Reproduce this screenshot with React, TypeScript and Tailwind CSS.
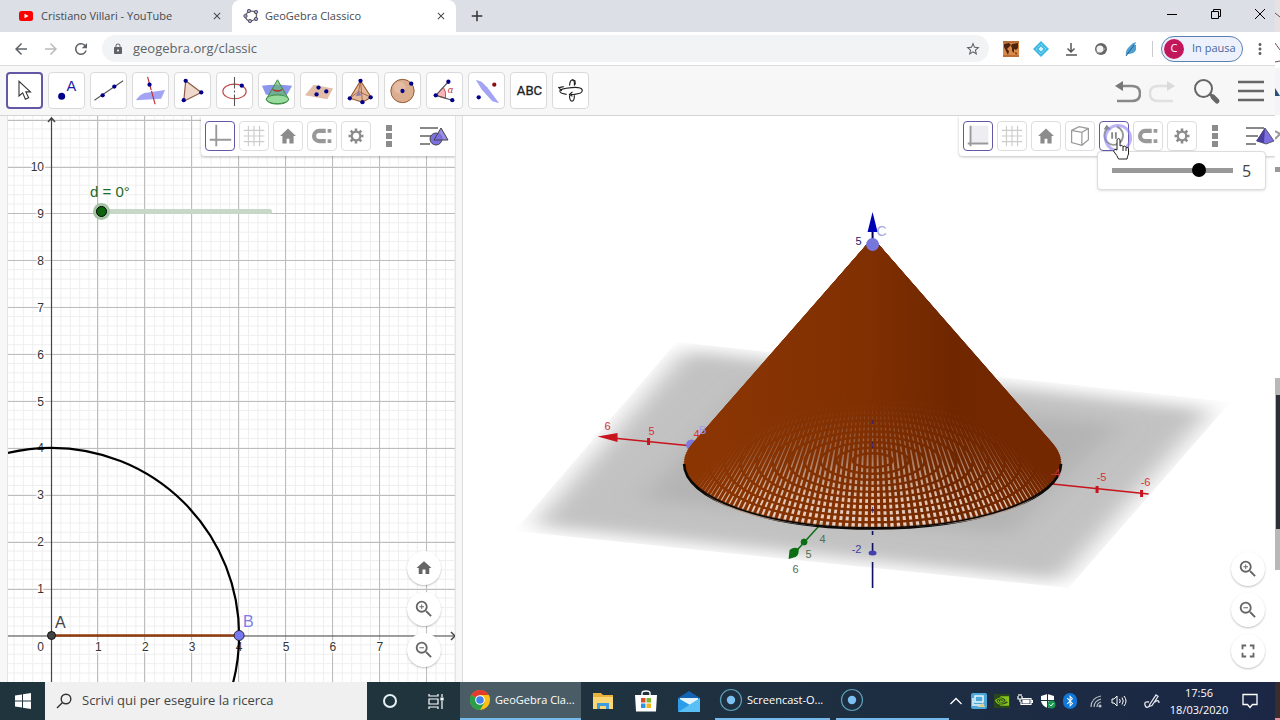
import type { ReactNode } from "react";
import {
  MdAdd,
  MdArrowBack,
  MdArrowForward,
  MdClose,
  MdFullscreen,
  MdHome,
  MdLock,
  MdMoreVert,
  MdRefresh,
  MdStarBorder,
  MdZoomIn,
  MdZoomOut,
} from "react-icons/md";
import { FaBluetoothB } from "react-icons/fa";
import { SiNvidia } from "react-icons/si";

const NAVY = "#00008b";

function Dot({ x, y, fill = NAVY }: { x: number; y: number; fill?: string }) {
  return <circle cx={x} cy={y} r="2.2" fill={fill} />;
}

/* ---------- Browser ---------- */

function GeoGebraLogo() {
  return (
    <svg className="size-4 shrink-0" viewBox="0 0 16 16">
      <ellipse cx="8" cy="8" rx="5.6" ry="4.8" fill="none" stroke="#666" strokeWidth="1.3" transform="rotate(-20 8 8)" />
      {[[6, 3], [13, 4], [13, 11], [7, 13], [2.5, 8]].map(([x, y]) => (
        <circle key={`${x}-${y}`} cx={x} cy={y} r="1.7" fill="#9c9cd8" stroke="#444" strokeWidth="0.8" />
      ))}
    </svg>
  );
}

function TabStrip() {
  return (
    <div className="flex h-8 items-stretch bg-[#dcdfe6] text-[11px] text-[#45494d]">
      <div className="flex w-[232px] items-center gap-2 pl-[19px] pr-[9px]">
        <svg className="h-[14px] w-[14px] shrink-0" viewBox="0 0 14 14">
          <rect y="2" width="14" height="10" rx="2.5" fill="#f00" />
          <path d="M5.5 4.7v4.6L9.5 7z" fill="#fff" />
        </svg>
        <span className="grow">Cristiano Villari - YouTube</span>
        <button aria-label="Chiudi scheda Cristiano Villari">
          <MdClose className="size-3" />
        </button>
      </div>
      <div className="flex w-[224px] items-center gap-1.5 rounded-t-lg bg-white pl-[11px] pr-[9px]">
        <GeoGebraLogo />
        <span className="grow">GeoGebra Classico</span>
        <button aria-label="Chiudi scheda GeoGebra">
          <MdClose className="size-3" />
        </button>
      </div>
      <button className="ml-3 text-[#333]" aria-label="Nuova scheda">
        <MdAdd className="size-[18px]" />
      </button>
      <div className="ml-auto flex items-center gap-8 pb-1 pr-[9px] text-black">
        <button aria-label="Riduci a icona">
          <svg className="size-3" viewBox="0 0 12 12" stroke="currentColor">
            <path d="M1 6.500h10" />
          </svg>
        </button>
        <button aria-label="Ripristina">
          <svg className="size-3" viewBox="0 0 12 12" fill="none" stroke="currentColor">
            <path d="M1.500 3.500h7v7h-7zM3.500 3.500v-2h7v7h-2" />
          </svg>
        </button>
        <button aria-label="Chiudi finestra">
          <svg className="size-3" viewBox="0 0 12 12" stroke="currentColor">
            <path d="M1 1l10 10M11 1L1 11" />
          </svg>
        </button>
      </div>
    </div>
  );
}

function Extensions() {
  return (
    <div className="flex items-center gap-[14px]">
      <button aria-label="Mappa">
        <svg className="size-4" viewBox="0 0 16 16">
          <rect width="16" height="16" fill="#d98a4a" />
          <path d="M1 3l5-1 2 2-2 2-2 2 2 2-1 4-2-4-2-4zM9 3l6-1v5l-2 2-2-1v4l-2-2V7L8 5zM12 11l2 1-1 2z" fill="#4c2410" />
          <path d="M0 15h16M0 1h16" stroke="#9c5424" />
        </svg>
      </button>
      <button aria-label="Rombo">
        <svg className="size-4" viewBox="0 0 16 16">
          <path d="M8 0l8 8-8 8-8-8z" fill="#3cb8e4" />
          <path d="M8 3l5 5-5 5-5-5z" fill="none" stroke="#bdeaf8" strokeDasharray="1 1" />
          <path d="M8 5.500l2.500 2.500-2.500 2.500L5.500 8z" fill="#d8f4fc" />
        </svg>
      </button>
      <button aria-label="Download">
        <svg className="size-4" viewBox="0 0 16 16" fill="none" stroke="#555" strokeWidth="1.5">
          <path d="M8 2v9M4.500 7.500L8 11l3.500-3.500M3 14h11" />
        </svg>
      </button>
      <button aria-label="Sfera">
        <svg className="size-4" viewBox="0 0 16 16">
          <circle cx="8" cy="8" r="6" fill="#666" />
          <circle cx="7" cy="8" r="3.500" fill="#f4f4f4" />
          <path d="M3 11q6 3 9-4" stroke="#aaa" fill="none" />
        </svg>
      </button>
      <button aria-label="Piuma">
        <svg className="size-4" viewBox="0 0 16 16">
          <path d="M3 14Q2 9 7 5q2-3 6-4l-1 3 1 0v5q-2 4-8 4z" fill="#4f9fd0" />
          <path d="M3 15L11 4" stroke="#245e94" />
        </svg>
      </button>
    </div>
  );
}

function AddressBar() {
  return (
    <div className="flex h-[34px] items-center border-b border-[#dcdcdc] bg-white pl-3 pr-1.5 text-[#5f6368]">
      <div className="flex gap-3">
        <button aria-label="Indietro">
          <MdArrowBack className="size-[18px]" />
        </button>
        <button className="text-[#bbb]" aria-label="Avanti">
          <MdArrowForward className="size-[18px]" />
        </button>
        <button aria-label="Ricarica">
          <MdRefresh className="size-[18px]" />
        </button>
      </div>
      <div className="ml-3 flex h-[27px] grow items-center gap-[9px] rounded-full bg-[#f1f3f4] pl-2.5 pr-2">
        <MdLock className="size-3 shrink-0" />
        <input
          className="min-w-0 grow bg-transparent text-[13px] outline-none"
          aria-label="Indirizzo"
          defaultValue="geogebra.org/classic"
        />
        <button aria-label="Preferiti">
          <MdStarBorder className="size-4" />
        </button>
      </div>
      <div className="flex items-center pl-[14px]">
        <Extensions />
        <span className="ml-[13px] mr-2 h-4 w-px bg-[#ccc]" />
        <button className="flex h-[26px] w-[82px] items-center gap-2 rounded-full border border-[#5a80b4] bg-[#edf1fb] pl-0.5 text-[11px] text-[#4868a0]">
          <span className="flex size-5 items-center justify-center rounded-full bg-[#c2185b] text-white">C</span>
          In pausa
        </button>
        <button className="ml-2" aria-label="Menu di Chrome">
          <MdMoreVert className="size-[18px]" />
        </button>
      </div>
    </div>
  );
}

/* ---------- GeoGebra tools ---------- */

const tools: { name: string; icon: ReactNode }[] = [
  {
    name: "Muovi",
    icon: <path d="M12 8v16l4-3.500 3 7 3.500-1.500-3-6.500h5z" fill="#fff" stroke="#333" strokeWidth="1.2" />,
  },
  {
    name: "Punto",
    icon: (
      <>
        <circle cx="13" cy="24" r="3.600" fill={NAVY} />
        <text x="18" y="19" fontSize="15" fill="#1a1aa8" fontFamily="Liberation Sans, sans-serif">A</text>
      </>
    ),
  },
  {
    name: "Retta",
    icon: (
      <>
        <path d="M3.500 28L33 8" stroke="#555" strokeWidth="1.1" />
        <Dot x={12} y={23} />
        <Dot x={24} y={14} />
      </>
    ),
  },
  {
    name: "Perpendicolare",
    icon: (
      <>
        <path d="M3 28q4-6 9-7.500l21-3-4 9z" fill="#a4a4f4" />
        <path d="M15 4l8 29" stroke="#c03030" strokeWidth="1.2" strokeDasharray="14 1" />
        <Dot x={17} y={12} />
      </>
    ),
  },
  {
    name: "Poligono",
    icon: (
      <>
        <path d="M11 8l16 12-18 9z" fill="#f0d8cc" stroke="#8c5a48" strokeWidth="1.2" />
        <Dot x={11} y={8} />
        <Dot x={27} y={20} />
        <Dot x={9} y={28} />
      </>
    ),
  },
  {
    name: "Circonferenza con asse",
    icon: (
      <>
        <ellipse cx="18" cy="19" rx="12" ry="7.500" fill="none" stroke="#c44848" strokeWidth="1.2" />
        <path d="M18 4v12M18 18v2M18 22v12" stroke="#555" strokeWidth="1.1" />
        <Dot x={25.500} y={13} />
      </>
    ),
  },
  {
    name: "Intersezione di superfici",
    icon: (
      <>
        <path d="M3 13q14-2 31 0l-5 9q-10 3-22 0z" fill="#8b96ea" />
        <path d="M19 7L7.500 27q2 5 11.500 5t11.500-5z" fill="#62b868" fillOpacity="0.650" stroke="#398a40" />
        <ellipse cx="19" cy="27" rx="11.500" ry="4.500" fill="#98e0a0" fillOpacity="0.700" stroke="#398a40" />
        <path d="M14 17q5 3 10 0" fill="none" stroke="#b42828" strokeWidth="1.3" />
      </>
    ),
  },
  {
    name: "Piano per tre punti",
    icon: (
      <>
        <path d="M4 23l9-11 20 4-6 11z" fill="#e2bda8" />
        <Dot x={18} y={15} />
        <Dot x={16} y={22} />
        <Dot x={26} y={19} />
      </>
    ),
  },
  {
    name: "Piramide",
    icon: (
      <>
        <path d="M18 8L7 26l13 4 9-5z" fill="#e3b99c" stroke="#96552c" strokeWidth="1.1" />
        <path d="M18 8l2 22M7 26l9-7 13 6M18 8l-2 11" fill="none" stroke="#96552c" strokeWidth="0.800" />
        <path d="M13 24l3-5 3 4z" fill="#8a7ab0" />
        <Dot x={18} y={8} />
        <Dot x={7} y={26} />
        <Dot x={20} y={30} />
        <Dot x={28.500} y={25} />
      </>
    ),
  },
  {
    name: "Sfera",
    icon: (
      <>
        <circle cx="18" cy="18.500" r="12" fill="#dcae90" stroke="#96552c" />
        <circle cx="15" cy="15" r="6" fill="#e4bda4" />
        <Dot x={18} y={18.500} />
        <Dot x={27} y={11} />
      </>
    ),
  },
  {
    name: "Angolo",
    icon: (
      <>
        <path d="M9 23l8-8q3 4 2 11z" fill="#f8b4b8" stroke="#c03030" strokeWidth="0.800" />
        <path d="M22 9L9 23l17 5" fill="none" stroke="#555" strokeWidth="1.200" />
        <text x="21" y="21" fontSize="10" fill="#c03030" fontStyle="italic">α</text>
        <Dot x={22} y={9} />
        <Dot x={9} y={23} />
        <Dot x={26} y={28} />
      </>
    ),
  },
  {
    name: "Simmetria rispetto a un piano",
    icon: (
      <>
        <path d="M7 7l6 2 6 6 12 16-7-2-11-12z" fill="#a4a4f4" />
        <Dot x={26} y={12} fill="#8b1010" />
        <Dot x={10} y={25} />
      </>
    ),
  },
  {
    name: "Testo",
    icon: <text x="19" y="23" fontSize="13.500" textAnchor="middle" fill="#222" stroke="#222" strokeWidth="0.300" fontFamily="Roboto, sans-serif">ABC</text>,
  },
  {
    name: "Ruota la vista grafica 3D",
    icon: (
      <g fill="none" stroke="#222" strokeWidth="1.200">
        <path d="M14 22q-7-1-7-3.500t12-3.500 11 3.500q0 2.500-8 3.500-3 .3-4 0M17 13q.5-6 3-6t2 6M17 23q0 6 2.500 6T22 23" />
        <path d="M20 19.500l-3 2.500 3 2M11 14l-5 1 3 3.500M23 12l-.5-4-3-1" />
      </g>
    ),
  },
];

function ToolBar() {
  return (
    <div className="flex h-[50px] items-center border-b border-[#d4d4d4] bg-[#f7f7f7] pl-1.5 pr-[11px]">
      <div className="flex gap-[5px]">
        {tools.map((tool, i) => (
          <button
            key={tool.name}
            aria-label={tool.name}
            className={
              i === 0
                ? "size-[37px] rounded-[4px] border-2 border-[#6557a5] bg-white"
                : "size-[37px] rounded-[4px] border border-[#dadada] bg-white"
            }
          >
            <svg className="h-full w-full" viewBox="0 0 36 36">{tool.icon}</svg>
          </button>
        ))}
      </div>
      <div className="ml-auto flex items-center">
        <button aria-label="Annulla">
          <svg className="h-7 w-[26px]" viewBox="0 0 26 28" fill="none">
            <path d="M4 9h13q8 0 8 7.500t-8 7.500H2" stroke="#888" strokeWidth="2.500" />
            <path d="M0 9l8-5v10z" fill="#777" />
          </svg>
        </button>
        <button className="ml-2" aria-label="Ripristina">
          <svg className="h-7 w-[26px]" viewBox="0 0 26 28" fill="none">
            <path d="M22 9H9q-8 0-8 7.500t8 7.500h15" stroke="#e0e0e0" strokeWidth="2.500" />
            <path d="M26 9l-8-5v10z" fill="#dadada" />
          </svg>
        </button>
        <button className="ml-[18px]" aria-label="Cerca">
          <svg className="size-7" viewBox="0 0 28 28" fill="none" stroke="#666">
            <circle cx="10.500" cy="11.500" r="8.500" strokeWidth="2" />
            <path d="M17 17l3 3" strokeWidth="3" />
            <path d="M20 20l4 4" strokeWidth="5" strokeLinecap="round" />
          </svg>
        </button>
        <button className="ml-[17px]" aria-label="Menu">
          <svg className="h-6 w-[26px]" viewBox="0 0 26 24" stroke="#666" strokeWidth="2.600">
            <path d="M0 3h26M0 12h26M0 21h26" />
          </svg>
        </button>
      </div>
    </div>
  );
}

/* ---------- View style bars ---------- */

const GridIcon = (
  <path d="M9 4v22M15 4v22M21 4v22M4 9h22M4 15h22M4 21h22" stroke="#ccc" strokeWidth="1.200" />
);
const MagnetIcon = (
  <g fill="none" stroke="#999" strokeWidth="4.500">
    <path d="M19 9.500h-7a5.500 5.500 0 0 0 0 11h7" />
    <path d="M21 9.500h4M21 20.500h4" strokeWidth="4" />
  </g>
);
const GearIcon = (
  <g fill="none" stroke="#8c8c8c">
    <circle cx="15" cy="15" r="4.600" strokeWidth="2.400" />
    <path
      d="M15 7v3.500M15 19.500V23M7 15h3.500M19.500 15H23M9.300 9.300l2.500 2.500M18.200 18.200l2.500 2.500M20.700 9.300l-2.500 2.500M11.800 18.200l-2.500 2.500"
      strokeWidth="2.800"
    />
  </g>
);
const HomeIcon = <path d="M15 7l8.500 8H21v8h-4.500v-5h-3v5H9v-8H6.500z" fill="#8c8c8c" />;

function StyleButton({ name, active, children }: { name: string; active?: boolean; children: ReactNode }) {
  return (
    <button
      aria-label={name}
      className={
        active
          ? "size-[30px] rounded-[4px] border border-[#6557a5] bg-white"
          : "size-[30px] rounded-[4px] border border-[#dedede] bg-white"
      }
    >
      <svg className="h-full w-full" viewBox="0 0 30 30">{children}</svg>
    </button>
  );
}

function MoreDots() {
  return (
    <button className="ml-2" aria-label="Altro">
      <svg className="h-6 w-3" viewBox="0 0 12 24" fill="#8c8c8c">
        <path d="M3 1h6v6H3zM3 9h6v6H3zM3 17h6v6H3z" />
      </svg>
    </button>
  );
}

/* ---------- 2D view ---------- */

const UNIT = 46.9;
const OX = 51.5;
const OY = 635.5;

function Graph2D() {
  const minorX = Array.from({ length: 49 }, (_, i) => OX + (i - 4) * (UNIT / 5));
  const minorY = Array.from({ length: 62 }, (_, i) => OY - (i - 5) * (UNIT / 5));
  const majorX = [1, 2, 3, 4, 5, 6, 7, 8];
  const majorY = [1, 2, 3, 4, 5, 6, 7, 8, 9, 10, 11];
  return (
    <svg className="block h-full w-full" viewBox="8 116 448 566" preserveAspectRatio="xMinYMin slice">
      <g stroke="#efefef">
        {minorX.map((x) => (
          <path key={x} d={`M${x} 116v566`} />
        ))}
        {minorY.map((y) => (
          <path key={y} d={`M8 ${y}h448`} />
        ))}
      </g>
      <g stroke="#bdbdbd">
        {majorX.map((n) => (
          <path key={n} d={`M${Math.round(OX + n * UNIT) - 0.5} 116v566`} />
        ))}
        {majorY.map((n) => (
          <path key={n} d={`M8 ${Math.round(OY - n * UNIT) + 0.5}h448`} />
        ))}
      </g>
      <g stroke="#444" fill="none">
        <path d="M51.500 118v564M8 636h447" strokeWidth="1.200" />
        <path d="M48 122l3.500-4 3.500 4M451 632l4 4-4 4" strokeWidth="1.500" />
      </g>
      <g fontSize="12" fill="#333" fontFamily="Liberation Sans, Arial, sans-serif" stroke="#fff" strokeWidth="3" paintOrder="stroke">
        {majorY.slice(0, 10).map((n) => (
          <text key={n} x="44" y={OY - n * UNIT + 4.500} textAnchor="end">{n}</text>
        ))}
        {majorX.slice(0, 7).map((n) => (
          <text key={n} x={OX + n * UNIT} y="651" textAnchor="middle">{n}</text>
        ))}
        <text x="44" y="651" textAnchor="end">0</text>
      </g>
      <circle cx={OX} cy={OY} r={UNIT * 4} fill="none" stroke="#000" strokeWidth="2.200" />
      <path d={`M${OX} ${OY}h${UNIT * 4}`} stroke="#8f3d10" strokeWidth="2.500" />
      <circle cx={OX} cy={OY} r="4" fill="#444" stroke="#111" />
      <circle cx={OX + UNIT * 4} cy={OY} r="5" fill="#7878f0" stroke="#223" />
      <g fontSize="16" fontFamily="Liberation Sans, Arial, sans-serif">
        <text x="55" y="628" fill="#444">A</text>
        <text x="243" y="627" fill="#7d7de8">B</text>
      </g>
    </svg>
  );
}

const roundButton = "flex size-[34px] items-center justify-center rounded-full bg-white text-[#666] shadow-[0_1px_2px_rgba(0,0,0,0.25)]";

function View2D() {
  return (
    <section className="relative w-[35.4%] min-w-0 shrink-0 overflow-hidden border-x border-[#e4e4e4] bg-white">
      <Graph2D />
      <label className="absolute left-[82px] top-[66px] flex flex-col text-[15px] leading-5 text-[#1d6b2a] [font-family:'Liberation_Sans',sans-serif]">
        d = 0°
        <input
          type="range"
          min="0"
          max="360"
          defaultValue="0"
          className="ml-1.5 mt-1 h-[11px] w-[176px] appearance-none bg-transparent [&::-webkit-slider-runnable-track]:h-[5px] [&::-webkit-slider-runnable-track]:rounded-full [&::-webkit-slider-runnable-track]:bg-[#c8d8c8] [&::-webkit-slider-thumb]:-mt-[3px] [&::-webkit-slider-thumb]:size-[11px] [&::-webkit-slider-thumb]:appearance-none [&::-webkit-slider-thumb]:rounded-full [&::-webkit-slider-thumb]:border [&::-webkit-slider-thumb]:border-black [&::-webkit-slider-thumb]:bg-[#0b640b] [&::-webkit-slider-thumb]:shadow-[0_0_0_3px_#a4c4a4]"
        />
      </label>
      <div className="absolute right-0 top-0 flex h-10 items-center gap-1 rounded-bl bg-white pl-1 pr-1.5 shadow-[0_1px_3px_rgba(0,0,0,0.25)]">
        <StyleButton name="Assi" active>
          <path d="M11 3v23M4 19h23" stroke="#999" strokeWidth="2" />
        </StyleButton>
        <StyleButton name="Griglia">{GridIcon}</StyleButton>
        <StyleButton name="Vista standard">{HomeIcon}</StyleButton>
        <StyleButton name="Cattura punto">{MagnetIcon}</StyleButton>
        <StyleButton name="Impostazioni">{GearIcon}</StyleButton>
        <MoreDots />
        <button className="ml-5" aria-label="Barra di stile">
          <svg className="h-6 w-[30px]" viewBox="0 0 30 24">
            <path d="M1 4h18M1 12h12M1 20h10" stroke="#888" strokeWidth="2" />
            <circle cx="17" cy="15" r="6" fill="#7c6fe0" stroke="#444" />
            <path d="M22 4l7 12H15z" fill="#7c6fe0" fillOpacity="0.800" stroke="#444" />
          </svg>
        </button>
      </div>
      <div className="absolute bottom-[15px] right-[14px] flex flex-col gap-[7px]">
        <button className={roundButton} aria-label="Vista standard"><MdHome className="size-[18px]" /></button>
        <button className={roundButton} aria-label="Zoom avanti"><MdZoomIn className="size-[22px]" /></button>
        <button className={roundButton} aria-label="Zoom indietro"><MdZoomOut className="size-[22px]" /></button>
      </div>
    </section>
  );
}

/* ---------- 3D view ---------- */

// one traced segment every two degrees of d
const trace = Array.from({ length: 180 }, (_, i) => {
  const t = ((i * 2 + 1) * Math.PI) / 180;
  return { x: 872 + 188 * Math.cos(t), y: 464 + 64 * Math.sin(t) };
});
const backTrace = trace.slice(90);
const frontTrace = trace.slice(0, 90);

const rings = [20, 36, 52, 68, 84, 100, 116, 132, 148, 164];

function Graph3D() {
  return (
    <svg className="block h-full w-full" viewBox="462 116 813 566" preserveAspectRatio="xMidYMin slice">
      <defs>
        <linearGradient id="brown" gradientUnits="userSpaceOnUse" x1="700" y1="0" x2="1060" y2="0">
          <stop offset="0" stopColor="#8b3503" />
          <stop offset="0.450" stopColor="#813002" />
          <stop offset="0.700" stopColor="#702700" />
          <stop offset="1" stopColor="#752800" />
        </linearGradient>
        <linearGradient id="fade" x1="0" y1="0" x2="0" y2="1">
          <stop offset="0" stopColor="#7c2d02" />
          <stop offset="0.550" stopColor="#7c2d02" />
          <stop offset="0.750" stopColor="#9a5a38" stopOpacity="0.700" />
          <stop offset="0.900" stopColor="#f4cdb4" stopOpacity="0.700" />
          <stop offset="1" stopColor="#f8dccb" stopOpacity="0.700" />
        </linearGradient>
        <filter id="soft" x="-20%" y="-20%" width="140%" height="140%">
          <feGaussianBlur stdDeviation="14 8" />
        </filter>
        <clipPath id="plane">
          <path d="M676 342L1230 402L1068 588L514 531z" />
        </clipPath>
      </defs>
      <g clipPath="url(#plane)">
        <path d="M684 350L1212 409L1060 581L532 526z" fill="#c2c2c2" filter="url(#soft)" />
        <path d="M750 385L1120 425L1010 535L640 500z" fill="#b4b4b4" filter="url(#soft)" />
      </g>

      <g stroke="#c8141c" fill="#c8141c" strokeWidth="1.500">
        <path d="M612 438L692 446M1052 484L1148 494" />
        <path d="M597 436.500L617 433v9z" stroke="none" />
        <path d="M648 438v7M1096.500 486v7M1141 490v7" strokeWidth="3" />
      </g>
      <g stroke="#0b6e14" fill="#0b6e14">
        <path d="M822 522L793 554" strokeWidth="1.500" />
        <circle cx="803.500" cy="542" r="3" />
        <path d="M788 559l1-9q5-4 9-1 1 5-3 8z" stroke="none" />
      </g>
      <circle cx="691" cy="445" r="5.500" fill="#7a7ae0" />

      <path d="M684 464A188 64 0 0 0 1060 464" fill="none" stroke="#0c0806" strokeWidth="3.500" />
      <path d="M870 243L691 446Q676 462 692 482Q730 528 872 528T1052 482Q1068 462 1053 446L874 243z" fill="url(#fade)" />
      <g stroke="url(#brown)" fill="none">
        {backTrace.map((p) => (
          <path key={p.x} d={`M872.100 240L${p.x} ${p.y}`} strokeWidth="3" />
        ))}
        {rings.map((r) => (
          <ellipse key={r} cx="872" cy={460 + r * 0.02} rx={r} ry={r * 0.36} strokeWidth="2.400" />
        ))}
        {frontTrace.map((p) => (
          <path key={p.x} d={`M872.100 240L${p.x} ${p.y}`} strokeWidth="3.200" />
        ))}
      </g>
      <path d="M684 464A188 64 0 0 0 1060 464" fill="none" stroke="#0c0806" strokeWidth="1.800" />

      <g stroke="#10108c" fill="none">
        <path d="M872 230v10" stroke="#000060" strokeWidth="2" />
        <path d="M872 531v4M872 543v12M872 562v26" stroke="#101060" strokeWidth="1.600" />
        <path d="M872 420v4M872 442v6M872 507v6" strokeWidth="1.200" opacity="0.600" />
      </g>
      <path d="M872 212l5 20h-10z" fill="#0000b4" />
      <ellipse cx="872" cy="553" rx="4" ry="2.500" fill="#4040b0" />
      <circle cx="872" cy="244.500" r="6.500" fill="#7676dc" />

      <g fontSize="11" textAnchor="middle" fontFamily="Liberation Sans, Arial, sans-serif">
        <g fill="#d2343c">
          <text x="607" y="430">6</text>
          <text x="651" y="435">5</text>
          <text x="696" y="438">4</text>
          <text x="1101" y="481">-5</text>
          <text x="1145" y="486">-6</text>
          <text x="1055" y="477">-4</text>
        </g>
        <g fill="#4f7053">
          <text x="822" y="543">4</text>
          <text x="808" y="558">5</text>
          <text x="795" y="573">6</text>
        </g>
        <text x="858" y="245" fill="#202070">5</text>
        <text x="856" y="553" fill="#4040a0">-2</text>
        <text x="881" y="236" fontSize="14" fill="#a8a8dc">C</text>
        <text x="702" y="434" fill="#9c9ce8">B</text>
      </g>
    </svg>
  );
}

function RotateButton() {
  return (
    <div className="relative size-[30px]">
      <StyleButton name="Avvia o arresta la rotazione" active>
        <path d="M8 7a10 10 0 1 0 10-2" fill="none" stroke="#999" strokeWidth="2" />
        <path d="M4 8l3-5 5 5zM12 11h2v7h-2zM16 11h2v7h-2z" fill="#888" />
      </StyleButton>
      <svg className="pointer-events-none absolute left-0 top-0 z-20 h-10 w-9" viewBox="0 0 36 40">
        <circle cx="19" cy="17" r="12.500" fill="none" stroke="#8c82f0" strokeOpacity="0.600" strokeWidth="3" />
        <path
          d="M18 29V18.500q1.500-2 3 0V25q2-1.500 3 .5 2-1 3 .8 2.500-.5 2.500 1.700v5q-1 2-1.500 5H19.500q-1-3-5-8 1-3 3.500-1z"
          fill="#fff"
          stroke="#222"
        />
        <path d="M24 26v4M27 27v3" stroke="#222" />
      </svg>
    </div>
  );
}

function View3D() {
  return (
    <section className="relative min-w-0 grow overflow-hidden border-l border-[#dedede] bg-white">
      <Graph3D />
      <div className="absolute right-0 top-0 flex h-10 items-center gap-1 rounded-bl bg-white pl-1 shadow-[0_1px_3px_rgba(0,0,0,0.25)]">
        <StyleButton name="Assi" active>
          <path d="M7 4h19v18H7z" fill="#ededf2" />
          <path d="M7 4v22M4 23h22" stroke="#999" strokeWidth="2" />
        </StyleButton>
        <StyleButton name="Griglia">{GridIcon}</StyleButton>
        <StyleButton name="Vista standard">{HomeIcon}</StyleButton>
        <StyleButton name="Proiezione">
          <path d="M6 9l8-4 10 2v12l-7 6-11-3zM6 9l11 2 7-4M17 11v14" fill="none" stroke="#999" strokeWidth="1.300" />
        </StyleButton>
        <RotateButton />
        <StyleButton name="Cattura punto">{MagnetIcon}</StyleButton>
        <StyleButton name="Impostazioni">{GearIcon}</StyleButton>
        <MoreDots />
        <button className="ml-5" aria-label="Barra di stile">
          <svg className="h-6 w-[30px]" viewBox="0 0 30 24">
            <path d="M1 4h18M1 12h12M1 20h10" stroke="#888" strokeWidth="2" />
            <path d="M20 4l9 13-8 3-9-3z" fill="#7c6fe0" stroke="#444" strokeWidth="0.800" />
            <path d="M20 4l-1 15-8-2z" fill="#4a3f9c" />
          </svg>
        </button>
      </div>
      <label className="absolute right-[9px] top-[35px] z-10 flex h-[39px] w-[169px] items-center gap-[9px] rounded-sm border border-[#ddd] bg-white pl-[14px] text-[16px] text-[#444] shadow-sm">
        <input
          type="range"
          min="-10"
          max="10"
          defaultValue="5"
          aria-label="Velocità di rotazione"
          className="h-[14px] w-[121px] appearance-none bg-transparent [&::-webkit-slider-runnable-track]:h-[5px] [&::-webkit-slider-runnable-track]:bg-[#999] [&::-webkit-slider-thumb]:-mt-[5px] [&::-webkit-slider-thumb]:size-[14px] [&::-webkit-slider-thumb]:appearance-none [&::-webkit-slider-thumb]:rounded-full [&::-webkit-slider-thumb]:bg-black"
        />
        5
      </label>
      <div className="absolute bottom-[14px] right-[10px] flex flex-col gap-[7px]">
        <button className={roundButton} aria-label="Zoom avanti"><MdZoomIn className="size-[22px]" /></button>
        <button className={roundButton} aria-label="Zoom indietro"><MdZoomOut className="size-[22px]" /></button>
        <button className={roundButton} aria-label="Schermo intero"><MdFullscreen className="size-[22px]" /></button>
      </div>
    </section>
  );
}

/* ---------- Windows taskbar ---------- */

function RecorderIcon() {
  return (
    <svg className="size-6 shrink-0" viewBox="0 0 24 24">
      <circle cx="12" cy="12" r="10.500" fill="none" stroke="#5c9cb8" strokeWidth="1.200" />
      <circle cx="12" cy="12" r="4.200" fill="#7cc0f4" />
    </svg>
  );
}

function ChromeIcon() {
  return (
    <svg className="size-5 shrink-0" viewBox="0 0 20 20">
      <circle cx="10" cy="10" r="10" fill="#fbc116" />
      <path d="M10 10L1.300 5A10 10 0 0 1 18.700 5H10z" fill="#e33b2e" />
      <path d="M1.300 5A10 10 0 0 0 10 20l4.500-7.500L10 10z" fill="#2a9f4a" />
      <path d="M10 5h8.700q1.300 2.300 1.300 5H10z" fill="#fbc116" />
      <circle cx="10" cy="10" r="4.800" fill="#fff" />
      <circle cx="10" cy="10" r="3.800" fill="#3f82ee" />
    </svg>
  );
}

function Tray() {
  return (
    <div className="ml-auto flex items-center pr-[17px] text-white">
      <button aria-label="Mostra icone nascoste">
        <svg className="size-3.5" viewBox="0 0 14 14" fill="none" stroke="currentColor" strokeWidth="1.300">
          <path d="M1.500 10L7 4.500l5.500 5.500" />
        </svg>
      </button>
      <div className="ml-2 flex items-center gap-[7px]">
        <svg className="size-4" viewBox="0 0 16 16">
          <rect width="16" height="16" rx="2" fill="#4ca8d8" />
          <path d="M4 3h8v6H4zM3 12h10M2 5v8" fill="none" stroke="#e8f6fc" strokeWidth="1.500" />
          <path d="M6 14l6-4 2 4z" fill="#e0d090" />
        </svg>
        <span className="flex h-3.5 w-4 items-center justify-center bg-[#29451c] text-[#86c41c]">
          <SiNvidia className="size-3.5" />
        </span>
        <svg className="size-4" viewBox="0 0 16 16" fill="none" stroke="#fff" strokeWidth="1.200">
          <path d="M5 5.500h9v6H4v-3M14 7.500h1.500v2H14M1 3v3h4V3M2 1v2M4 1v2M3 6v3" />
          <path d="M6 7h6v3H6z" fill="#fff" />
        </svg>
        <svg className="size-4" viewBox="0 0 16 16">
          <path d="M7.500 1L14 3v5q-1 5-6.500 7Q2 13 1 8V3z" fill="#fff" />
          <path d="M7.500 1v14M1 7.500h13" stroke="#1b2b40" />
          <circle cx="11.500" cy="11.500" r="4" fill="#189850" />
          <path d="M9.500 11.500l1.500 1.500 2.500-3" stroke="#fff" fill="none" />
        </svg>
        <span className="flex h-4 w-3.5 items-center justify-center rounded-full bg-[#0f78d8]">
          <FaBluetoothB className="size-3" />
        </span>
        <svg className="ml-1 size-4" viewBox="0 0 16 16" fill="none" stroke="#b8c0c8" strokeWidth="1.200">
          <path d="M3 14Q3 5 13 3M6 14q0-6 7-8M9 14q0-4 4-5" />
          <circle cx="12" cy="13" r="1" fill="#fff" />
        </svg>
        <svg className="size-4" viewBox="0 0 16 16" fill="none" stroke="#fff">
          <path d="M1 6h2l3-3v10l-3-3H1zM8.500 6q1.500 2 0 4M11 4.500q2.500 3.500 0 7M13 3q4 5 0 10" />
        </svg>
        <svg className="ml-2.5 size-4" viewBox="0 0 16 16" fill="none" stroke="#e4e8ec" strokeWidth="1.300">
          <path d="M6 11L12 2l2 1.500-6 9-3 1zM5 9q-5-1-4 3t5 1M11 9q4-3 4 1" />
        </svg>
      </div>
      <time className="ml-2 w-[62px] text-center text-[11px] leading-[17px]">
        17:56
        <br />
        18/03/2020
      </time>
      <button className="ml-3 mr-1" aria-label="Centro notifiche">
        <svg className="size-4" viewBox="0 0 16 16" fill="none" stroke="currentColor" strokeWidth="1.300">
          <path d="M1 1.500h14v10h-4.500L8 14.500l-2.500-3H1z" />
        </svg>
      </button>
    </div>
  );
}

function Taskbar() {
  return (
    <footer className="flex h-[38px] shrink-0 items-stretch whitespace-nowrap bg-linear-to-r from-[#20343e] from-40% to-[#1b2745] text-[11px] text-white">
      <button className="flex w-[45px] shrink-0 items-center justify-center" aria-label="Start">
        <svg className="size-4" viewBox="0 0 16 16" fill="#fff">
          <path d="M0 2.500l7-1v6H0zM8 1.300L16 0v7.500H8zM0 8.500h7v6l-7-1zM8 8.500h8V16l-8-1.300z" />
        </svg>
      </button>
      <label className="flex w-[322px] shrink-0 items-center gap-2.5 bg-[#f0f0f0] pl-[11px] text-[#333]">
        <svg className="size-4 shrink-0" viewBox="0 0 16 16" fill="none" stroke="#333" strokeWidth="1.400">
          <circle cx="10" cy="6" r="4.800" />
          <path d="M6.500 9.500L1 15" />
        </svg>
        <input
          className="min-w-0 grow bg-transparent text-[13px] outline-none placeholder:text-[#444]"
          aria-label="Cerca"
          placeholder="Scrivi qui per eseguire la ricerca"
        />
      </label>
      <button className="flex w-[45px] shrink-0 items-center justify-center" aria-label="Cortana">
        <svg className="size-4" viewBox="0 0 16 16" fill="none" stroke="#e4f0f4" strokeWidth="2">
          <circle cx="8" cy="8" r="6" />
        </svg>
      </button>
      <button className="flex w-12 shrink-0 items-center justify-center" aria-label="Visualizzazione attività">
        <svg className="size-4" viewBox="0 0 16 16" fill="none" stroke="#fff" strokeWidth="1.200">
          <path d="M1 1v2h9V1M1 6h9v5H1zM1 16v-2h9v2M14 1v3M14 8v8" />
          <path d="M13 5h2v2h-2z" fill="#fff" />
        </svg>
      </button>
      <button className="flex w-[121px] shrink-0 items-center gap-[5px] border-b-2 border-[#76b9ed] bg-[#4a5c65] pl-[10px]">
        <ChromeIcon />
        GeoGebra Cla...
      </button>
      <button className="flex w-[43px] shrink-0 items-center justify-center" aria-label="Esplora file">
        <svg className="h-5 w-[22px]" viewBox="0 0 22 20">
          <path d="M1 2h8l2 2h10v14H1z" fill="#e8b23c" />
          <path d="M1 6h20v12H1z" fill="#fad674" />
          <path d="M5 18v-6h12v6h-3v-3H8v3z" fill="#3d9be0" />
        </svg>
      </button>
      <button className="flex w-[43px] shrink-0 items-center justify-center" aria-label="Microsoft Store">
        <svg className="size-[22px]" viewBox="0 0 22 22">
          <path d="M7 6V3q0-2 4-2t4 2v3" fill="none" stroke="#fff" strokeWidth="1.400" />
          <path d="M0 5h22l-1 16.500H1z" fill="#fff" />
          <path d="M6 8h4.500v4.500H6z" fill="#e04a2c" />
          <path d="M11.500 8H16v4.500h-4.500z" fill="#7eb828" />
          <path d="M6 13.500h4.500V18H6z" fill="#2898e0" />
          <path d="M11.500 13.500H16V18h-4.500z" fill="#f4b41c" />
        </svg>
      </button>
      <button className="flex w-[44px] shrink-0 items-center justify-center" aria-label="Posta">
        <svg className="h-[21px] w-6" viewBox="0 0 24 21">
          <path d="M1 7l11-7 11 7v13H1z" fill="#1462b4" />
          <path d="M3 7h18v7H3z" fill="#e4f4fc" />
          <path d="M1 7l12 7-12 7z" fill="#2a9ce8" />
          <path d="M23 7v14H1z" fill="#58c0f4" />
        </svg>
      </button>
      <button className="ml-1 flex w-[115px] shrink-0 items-center gap-1 border-b-2 border-[#76b9ed] pl-1">
        <RecorderIcon />
        Screencast-O...
      </button>
      <button className="ml-1.5 flex w-[113px] shrink-0 items-center border-b-2 border-[#76b9ed] pl-1" aria-label="Registratore">
        <RecorderIcon />
      </button>
      <Tray />
    </footer>
  );
}

// sliver of the neighbouring monitor
function NextScreen() {
  return (
    <svg className="h-full w-[5px] shrink-0" viewBox="0 0 5 720" preserveAspectRatio="none">
      <path d="M0 0h5v720H0z" fill="#fff" />
      <path d="M0 0h5v32H0z" fill="#e6e2e4" />
      <path d="M0 13l5 4M0 43l5 7M0 62l5-1M0 88l5 8" stroke="#70505c" />
      <path d="M0 68h5v47H0z" fill="#f4f4f8" />
      <path d="M0 88l5 8H0z" fill="#285078" />
      <path d="M0 131l5 3-5 5" fill="none" stroke="#999" strokeWidth="2" />
      <path d="M0 167h5v5H0z" fill="#999" />
      <path d="M0 378h5v192H0z" fill="#b8b8b8" />
      <path d="M1 395h4v134H1z" fill="#2c3036" />
      <path d="M0 682h5v38H0z" fill="#3a2c2c" />
      <path d="M0 718h5v2H0z" fill="#e890a0" />
    </svg>
  );
}

export default function App() {
  return (
    <div className="flex h-screen overflow-hidden bg-white [font-family:'Open_Sans','Noto_Sans',sans-serif]">
      <div className="flex min-w-0 grow flex-col">
        <TabStrip />
        <AddressBar />
        <ToolBar />
        <main className="flex min-h-0 grow gap-1.5 bg-[#f7f7f7] pl-[7px]">
          <View2D />
          <View3D />
        </main>
        <Taskbar />
      </div>
      <NextScreen />
    </div>
  );
}
